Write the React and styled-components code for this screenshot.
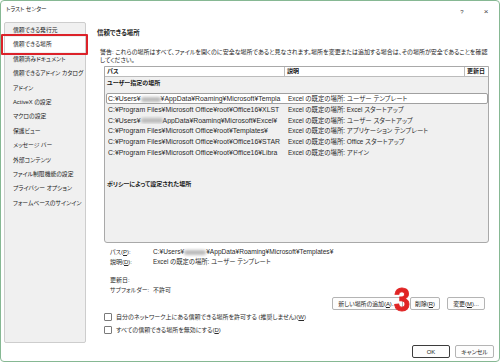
import React from 'react';
import styled, { createGlobalStyle } from 'styled-components';

const GlobalStyle = createGlobalStyle`
    html, body {
        margin: 0;
        padding: 0;
        background: #ffffff;
    }
    body {
        font-family: "Liberation Sans", "Noto Sans CJK JP", sans-serif;
        font-feature-settings: "palt";
        font-size: 6px;
        color: #1b1b1b;
    }
`;

const Window = styled.div`
    width: 500px;
    height: 362px;
    box-sizing: border-box;
    border: 1px solid #86b893;
    border-radius: 4px;
    background: #ffffff;
    display: flex;
    flex-direction: column;
    overflow: hidden;
`;

const TitleBar = styled.div`
    height: 21px;
    display: flex;
    align-items: flex-start;
    padding: 5px 1px 0 5px;
    box-sizing: border-box;
`;

const Title = styled.div`
    flex: 1;
    font-size: 5.6px;
    line-height: 7px;
`;

const TitleButton = styled.div`
    width: 24px;
    text-align: center;
    color: #444;
    font-size: ${(p) => p.size || 7}px;
    line-height: 12px;
`;

const Body = styled.div`
    display: flex;
    height: 321px;
`;

const Sidebar = styled.div`
    width: 82px;
    flex-shrink: 0;
    margin-left: 3px;
    background: #f0f0f0;
    border: 1px solid #cdcdcd;
    border-radius: 2px;
    box-sizing: border-box;
`;

const NavItem = styled.div`
    position: relative;
    height: 14.4px;
    line-height: 14.4px;
    padding-left: 8px;
    white-space: nowrap;
    font-size: 5.8px;
    background: ${(p) => (p.active ? '#ffffff' : 'transparent')};

    ${(p) => p.active && `
        &::after {
            content: '';
            position: absolute;
            left: -4px;
            right: -3px;
            top: -3px;
            bottom: -3px;
            border: 2px solid #dc2229;
            border-radius: 1px;
        }
    `}
`;

const Main = styled.div`
    flex: 1;
    min-width: 0;
    padding: 7px 11px 0 11px;
    display: flex;
    flex-direction: column;
`;

const Heading = styled.div`
    font-size: 6.4px;
    font-weight: 700;
    line-height: 8px;
`;

const Warning = styled.div`
    margin: 11px 0 2px 3px;
    line-height: 8px;
    white-space: nowrap;
`;

const ListBox = styled.div`
    margin-left: 7px;
    width: 385px;
    height: 177px;
    border: 1px solid #a9a9a9;
    border-radius: 0 0 3px 3px;
    box-sizing: border-box;
    background: #f0f0f0;
    display: flex;
    flex-direction: column;
    overflow: hidden;
`;

const HeaderRow = styled.div`
    display: grid;
    grid-template-columns: 179px 180px 1fr;
    height: 10px;
    background: #ffffff;
    border-bottom: 1px solid #bcbcbc;
    box-sizing: border-box;
`;

const HeaderCell = styled.div`
    padding-left: 2px;
    line-height: 9px;
    font-weight: 700;
    border-left: ${(p) => (p.first ? 'none' : '1px solid #bcbcbc')};
    white-space: nowrap;
`;

const SectionLabel = styled.div`
    height: ${(p) => p.h}px;
    padding: ${(p) => p.pt}px 0 0 2px;
    box-sizing: border-box;
    line-height: 9px;
    font-weight: 700;
`;

const Row = styled.div`
    display: grid;
    grid-template-columns: 177px 1fr;
    height: 10.8px;
    line-height: 9px;
    margin-left: 1px;
    box-sizing: border-box;
    border: 1px solid ${(p) => (p.selected ? '#a0a0a0' : 'transparent')};
    border-radius: 2px;
    background: ${(p) => (p.selected ? '#ffffff' : 'transparent')};
`;

const Cell = styled.div`
    padding-left: 1px;
    white-space: nowrap;
    overflow: hidden;
    color: #2a2a2a;
    font-size: 6.9px;
`;

const DescCell = styled(Cell)`
    padding-left: 4px;
    font-size: 6.4px;
`;

const Blur = styled.span`
    display: inline-block;
    width: ${(p) => p.w}px;
    height: 5px;
    vertical-align: middle;
    background: #b9b9b9;
    filter: blur(1.4px);
    border-radius: 2px;
`;

const Details = styled.div`
    margin: 4px 0 0 13px;
    display: grid;
    grid-template-columns: 43px 1fr;
    line-height: 10px;
    color: #2a2a2a;
`;

const Value = styled.div`
    font-size: ${(p) => p.size || 6}px;
    white-space: nowrap;
`;

const Spacer = styled.div`
    grid-column: 1 / 3;
    height: 8px;
`;

const ButtonRow = styled.div`
    position: relative;
    display: flex;
    justify-content: flex-end;
    gap: 7px;
    margin-top: 2px;
    padding-right: 3px;
`;

const Button = styled.button`
    height: 13px;
    width: ${(p) => p.w}px;
    padding: 0 3px;
    font-family: inherit;
    font-feature-settings: "palt";
    font-size: 5.9px;
    color: #1b1b1b;
    background: #fdfdfd;
    border: ${(p) => (p.primary ? '1.5px solid #3c3c3c' : '1px solid #b4b4b4')};
    border-radius: 2px;
    box-sizing: border-box;
    line-height: 10px;
    white-space: nowrap;
    overflow: hidden;
`;

const Marker = styled.div`
    position: absolute;
    left: 297px;
    top: -15px;
    font-family: "Liberation Sans", "DejaVu Sans", sans-serif;
    font-weight: 900;
    font-size: 34px;
    line-height: 34px;
    color: #e02424;
    transform: scaleX(0.85);
    transform-origin: left;
    -webkit-text-stroke: 1px #e02424;
`;

const CheckRow = styled.label`
    display: flex;
    align-items: center;
    gap: 4px;
    height: 13px;
    margin-left: 7px;
    color: #2a2a2a;
`;

const Box = styled.span`
    width: 6px;
    height: 6px;
    border: 1px solid #7a7a7a;
    border-radius: 1px;
    background: #ffffff;
`;

const Footer = styled.div`
    display: flex;
    justify-content: flex-end;
    gap: 5px;
    padding: 2px 5px 0 0;
`;

const U = styled.span`
    text-decoration: underline;
`;

const navItems = [
    '信頼できる発行元',
    '信頼できる場所',
    '信頼済みドキュメント',
    '信頼できるアドイン カタログ',
    'アドイン',
    'ActiveX の設定',
    'マクロの設定',
    '保護ビュー',
    'メッセージ バー',
    '外部コンテンツ',
    'ファイル制限機能の設定',
    'プライバシー オプション',
    'フォームベースのサインイン',
];

const rows = [
    { pre: 'C:¥Users¥', blur: 20, path: '¥AppData¥Roaming¥Microsoft¥Templa', desc: 'ユーザー テンプレート', selected: true },
    { path: 'C:¥Program Files¥Microsoft Office¥root¥Office16¥XLST', desc: 'Excel スタートアップ' },
    { pre: 'C:¥Users¥', blur: 22, path: 'AppData¥Roaming¥Microsoft¥Excel¥', desc: 'ユーザー スタートアップ' },
    { path: 'C:¥Program Files¥Microsoft Office¥root¥Templates¥', desc: 'アプリケーション テンプレート' },
    { path: 'C:¥Program Files¥Microsoft Office¥root¥Office16¥STAR', desc: 'Office スタートアップ' },
    { path: 'C:¥Program Files¥Microsoft Office¥root¥Office16¥Libra', desc: 'アドイン' },
];

function App() {
    return (
        <>
            <GlobalStyle />
            <Window>
                <TitleBar>
                    <Title>トラスト センター</Title>
                    <TitleButton size={6}>?</TitleButton>
                    <TitleButton size={8}>×</TitleButton>
                </TitleBar>
                <Body>
                    <Sidebar>
                        {navItems.map((n, i) => (
                            <NavItem key={n} active={i === 1}>{n}</NavItem>
                        ))}
                    </Sidebar>
                    <Main>
                        <Heading>信頼できる場所</Heading>
                        <Warning>
                            警告: これらの場所はすべて、ファイルを開くのに安全な場所であると見なされます。場所を変更または追加する場合は、その場所が安全であることを確認
                            <br />
                            してください。
                        </Warning>
                        <ListBox>
                            <HeaderRow>
                                <HeaderCell first>パス</HeaderCell>
                                <HeaderCell>説明</HeaderCell>
                                <HeaderCell>更新日</HeaderCell>
                            </HeaderRow>
                            <SectionLabel h={16} pt={2}>ユーザー指定の場所</SectionLabel>
                            {rows.map((r, i) => (
                                <Row key={i} selected={r.selected}>
                                    <Cell>
                                        {r.pre}
                                        {r.blur && <Blur w={r.blur} />}
                                        {r.path}
                                    </Cell>
                                    <DescCell>Excel の既定の場所: {r.desc}</DescCell>
                                </Row>
                            ))}
                            <SectionLabel h={40} pt={22}>ポリシーによって設定された場所</SectionLabel>
                        </ListBox>
                        <Details>
                            <div>パス(<U>P</U>):</div>
                            <Value size={6.6}>C:¥Users¥<Blur w={22} />¥AppData¥Roaming¥Microsoft¥Templates¥</Value>
                            <div>説明(<U>D</U>):</div>
                            <Value size={6.3}>Excel の既定の場所: ユーザー テンプレート</Value>
                            <Spacer />
                            <div>更新日:</div>
                            <div></div>
                            <div>サブフォルダー:</div>
                            <Value>不許可</Value>
                        </Details>
                        <ButtonRow>
                            <Button w={71}>新しい場所の追加(<U>A</U>)...</Button>
                            <Button w={30}>削除(<U>R</U>)</Button>
                            <Button w={38}>変更(<U>M</U>)...</Button>
                            <Marker>3</Marker>
                        </ButtonRow>
                        <CheckRow>
                            <Box />
                            <span>自分のネットワーク上にある信頼できる場所を許可する (推奨しません)(<U>W</U>)</span>
                        </CheckRow>
                        <CheckRow>
                            <Box />
                            <span>すべての信頼できる場所を無効にする(<U>D</U>)</span>
                        </CheckRow>
                    </Main>
                </Body>
                <Footer>
                    <Button primary w={38}>OK</Button>
                    <Button w={39}>キャンセル</Button>
                </Footer>
            </Window>
        </>
    );
}

export default App;
